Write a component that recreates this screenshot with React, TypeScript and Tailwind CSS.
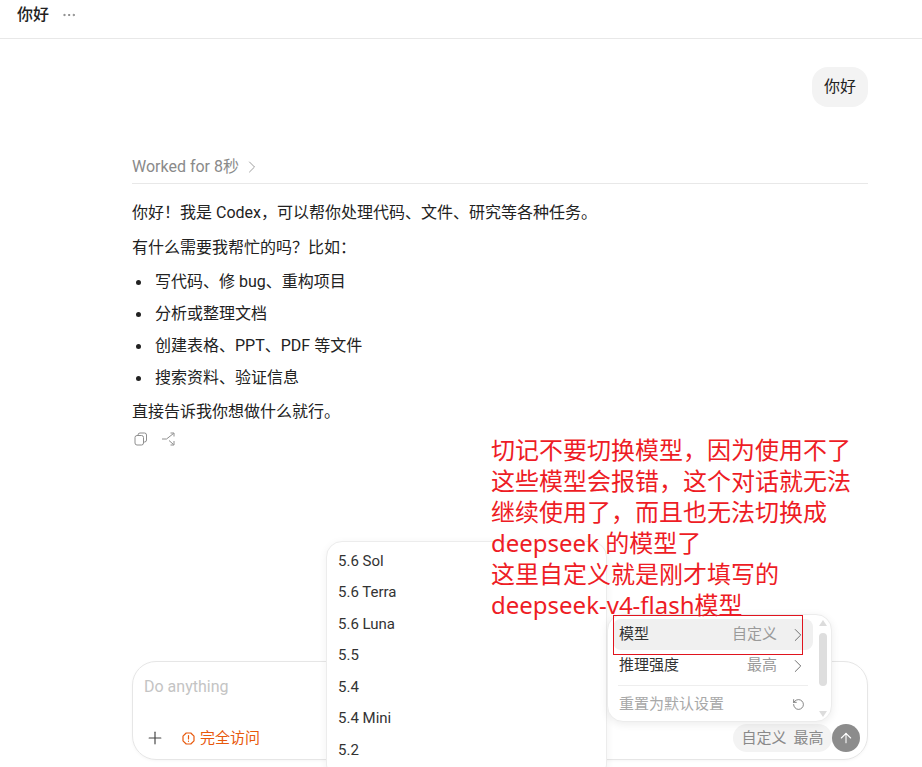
import { ArrowUp, ChevronRight, Ellipsis, Plus, RotateCcw } from 'lucide-react'

const models = ['5.6 Sol', '5.6 Terra', '5.6 Luna', '5.5', '5.4', '5.4 Mini', '5.2']

const tasks = ['写代码、修 bug、重构项目', '分析或整理文档', '创建表格、PPT、PDF 等文件', '搜索资料、验证信息']

const note = [
  '切记不要切换模型，因为使用不了',
  '这些模型会报错，这个对话就无法',
  '继续使用了，而且也无法切换成',
  'deepseek 的模型了',
  '这里自定义就是刚才填写的',
  'deepseek-v4-flash模型',
]

function CopyIcon() {
  return (
    <svg width="14" height="14" viewBox="0 0 14 14" fill="none" stroke="#8e8e8e" strokeWidth="1">
      <rect x="1" y="3.5" width="8.5" height="9.5" rx="2" />
      <path d="M4 3.5V3a2 2 0 0 1 2-2h4.5a2 2 0 0 1 2 2v5a2 2 0 0 1-2 2h-1" />
    </svg>
  )
}

function ForkIcon() {
  return (
    <svg width="14" height="14" viewBox="0 0 14 14" fill="none" stroke="#8e8e8e" strokeWidth="1">
      <path d="M1 7h4.5L12.5 1.5M9.5 1h3.5v3.5M8 8.5l4.5 4M13 9v4H9.5" />
    </svg>
  )
}

function WarnIcon() {
  return (
    <svg width="13" height="13" viewBox="0 0 13 13" fill="none" stroke="#e8590c" strokeWidth="1.2" strokeLinecap="round">
      <path d="M4.2 1h4.6L12 4.2v4.6L8.8 12H4.2L1 8.8V4.2Z" strokeLinejoin="round" />
      <path d="M6.5 3.6v3.4M6.5 9.2v.1" />
    </svg>
  )
}

export default function App() {
  return (
    <div className="relative flex h-[767px] w-[922px] flex-col overflow-hidden bg-white font-['Roboto','Noto_Sans_CJK_SC',sans-serif] text-[16px] text-[#222]">
      <header className="flex h-[39px] shrink-0 items-center gap-[12px] border-b border-[#e8e8e8] pb-[9px] pl-[17px]">
        <span className="leading-5 font-medium">你好</span>
        <Ellipsis className="h-[16px] w-[16px] text-[#777]" strokeWidth={1.3} />
      </header>

      <main className="flex flex-1 flex-col pr-[54px] pl-[132px]">
        <div className="mt-[28px] flex justify-end">
          <div className="flex h-[40px] w-[56px] items-center justify-center rounded-2xl bg-[#f3f3f3]">你好</div>
        </div>

        <div className="mt-[47px] flex h-[30px] items-start gap-[3px] border-b border-[#e8e8e8] pt-[3px] text-[#8a8a8a]">
          <span className="leading-5">Worked for 8秒</span>
          <ChevronRight className="h-[20px] w-[20px]" strokeWidth={1} />
        </div>

        <div className="mt-[19px] leading-5">
          <p>你好！我是 Codex，可以帮你处理代码、文件、研究等各种任务。</p>
          <p className="mt-[15px]">有什么需要我帮忙的吗？比如：</p>
          <ul className="mt-[8px] flex flex-col">
            {tasks.map(t => (
              <li key={t} className="flex h-[32px] items-center gap-[14px] pl-[4px]">
                <span className="h-[5px] w-[5px] rounded-full bg-[#222]" />
                {t}
              </li>
            ))}
          </ul>
          <p className="mt-[8px]">直接告诉我你想做什么就行。</p>
          <div className="mt-[10px] flex items-center gap-[13px] pl-[2px]">
            <CopyIcon />
            <ForkIcon />
          </div>
        </div>

        <div className="mt-auto mb-[7px] flex h-[99px] flex-col justify-between rounded-[24px] border border-[#e6e6e6] pt-[15px] pr-[7px] pb-[7px] pl-[11px] shadow-[0_1px_3px_rgba(0,0,0,0.04)]">
          <div className="leading-5 text-[#c4c4c4]">Do anything</div>
          <div className="flex items-center">
            <Plus className="ml-[1px] h-[20px] w-[20px] text-[#444]" strokeWidth={1.4} />
            <div className="ml-[17px] flex items-center gap-[5px] text-[15px] text-[#e8590c]">
              <WarnIcon />
              <span>完全访问</span>
            </div>
            <div className="ml-auto flex h-[28px] w-[99px] items-center justify-center gap-[7px] rounded-full bg-[#f3f3f3] text-[15px] text-[#8a8a8a]">
              <span>自定义</span>
              <span>最高</span>
            </div>
            <div className="flex h-[28px] w-[28px] items-center justify-center rounded-full bg-[#8c8c8c]">
              <ArrowUp className="h-[16px] w-[16px] text-white" strokeWidth={1.6} />
            </div>
          </div>
        </div>
      </main>

      {/* model list */}
      <div className="absolute top-[541px] left-[326px] h-[240px] w-[281px] rounded-2xl border border-[#ececec] bg-white pt-[3px] pl-[11px] text-[15px] text-[#333] shadow-[0_2px_8px_rgba(0,0,0,0.06)]">
        {models.map(m => (
          <div key={m} className="flex h-[31.5px] items-center">{m}</div>
        ))}
      </div>

      {/* settings menu */}
      <div className="absolute top-[614px] left-[607px] flex h-[108px] w-[225px] rounded-2xl border border-[#ececec] bg-white pt-[4px] pl-[5px] text-[15px] shadow-[0_2px_8px_rgba(0,0,0,0.08)]">
        <div className="w-[200px]">
          <div className="flex h-[31px] items-center justify-between rounded-lg bg-[#f0f0f0] pr-[4px] pl-[6px] text-[#333]">
            <span>模型</span>
            <span className="flex items-center gap-[10px] text-[#9a9a9a]">
              自定义
              <ChevronRight className="h-[22px] w-[22px] text-[#666]" strokeWidth={1} />
            </span>
          </div>
          <div className="flex h-[31px] items-center justify-between pr-[4px] pl-[6px] text-[#333]">
            <span>推理强度</span>
            <span className="flex items-center gap-[10px] text-[#9a9a9a]">
              最高
              <ChevronRight className="h-[22px] w-[22px] text-[#666]" strokeWidth={1} />
            </span>
          </div>
          <div className="mx-[5px] mt-[4px] border-t border-[#eeeeee]" />
          <div className="flex h-[37px] items-center justify-between pr-[8px] pl-[6px] text-[#a8a8a8]">
            <span>重置为默认设置</span>
            <RotateCcw className="h-[13px] w-[13px] text-[#555]" strokeWidth={1.3} />
          </div>
        </div>
        <div className="ml-[6px] flex w-[8px] flex-col items-center">
          <div className="mt-[1px] h-0 w-0 shrink-0 border-x-[4px] border-b-[6px] border-x-transparent border-b-[#dcdcdc]" />
          <div className="mt-[7px] h-[53px] w-[8px] shrink-0 rounded-full bg-[#dedede]" />
          <div className="mt-[25px] h-0 w-0 shrink-0 border-x-[4px] border-t-[6px] border-x-transparent border-t-[#dcdcdc]" />
        </div>
      </div>

      {/* red annotation */}
      <div className="absolute top-[615px] left-[613px] h-[40px] w-[190px] border border-[#e0141e]" />
      <div className="absolute top-[434px] left-[491px] font-['Noto_Sans','Noto_Sans_CJK_SC',sans-serif] text-[24px] leading-[31px] whitespace-nowrap text-[#ee1c25]">
        {note.map(line => (
          <div key={line}>{line}</div>
        ))}
      </div>
    </div>
  )
}
